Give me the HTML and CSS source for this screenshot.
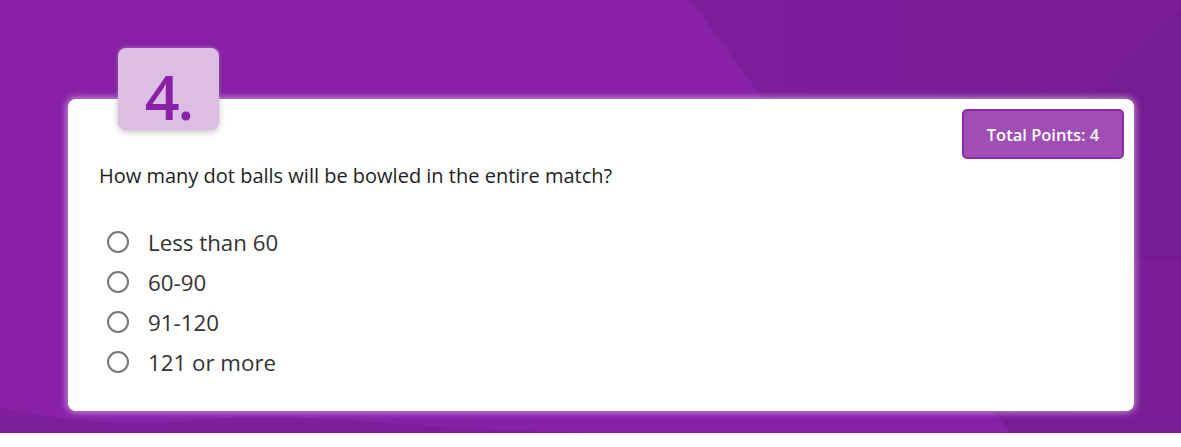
FILE: index.html
```html
<!DOCTYPE html>
<html>
<head>
<meta charset="utf-8">
<link rel="stylesheet" href="styles.css">
</head>
<body>
<div class="stage">
  <svg class="bg-shapes" width="1181" height="433" viewBox="0 0 1181 433" preserveAspectRatio="none">
    <defs>
      <linearGradient id="g1" x1="0" y1="0" x2="1" y2="0">
        <stop offset="0" stop-color="#6f1a8a" stop-opacity="0.6"/>
        <stop offset="1" stop-color="#741c91" stop-opacity="1"/>
      </linearGradient>
    </defs>
    <path d="M690 0 L1181 0 L1181 433 L1010 433 Z" fill="url(#g1)" opacity="0.75"/>
    <path d="M1181 10 C1100 80 1010 180 950 260 L1181 260 Z" fill="#6d1988" opacity="0.25"/>
    <path d="M0 408 C60 420 120 428 200 420 C300 410 420 430 600 433 L0 433 Z" fill="#6d1988" opacity="0.35"/>
  </svg>
  <div class="card">
    <div class="num">4.</div>
    <div class="card-top">
      <button class="points">Total Points: 4</button>
    </div>
    <div class="question">How many dot balls will be bowled in the entire match?</div>
    <ul class="options">
      <li class="option"><span class="radio"></span><span>Less than 60</span></li>
      <li class="option"><span class="radio"></span><span>60-90</span></li>
      <li class="option"><span class="radio"></span><span>91-120</span></li>
      <li class="option"><span class="radio"></span><span>121 or more</span></li>
    </ul>
  </div>
</div>
</body>
</html>
```
FILE: styles.css
```css
html, body {
  margin: 0;
  padding: 0;
  background: #ffffff;
  font-family: "Open Sans", "Noto Sans", sans-serif;
}
.stage {
  position: relative;
  height: 433px;
  background: #8921a8;
  padding: 99px 47px 0 68px;
  box-sizing: border-box;
  overflow: hidden;
}
.bg-shapes {
  position: absolute;
  left: 0;
  top: 0;
}
.card {
  position: relative;
  width: 1066px;
  height: 312px;
  box-sizing: border-box;
  background: #ffffff;
  border-radius: 8px;
  box-shadow: 0 0 6px 2px rgba(255, 255, 255, 0.45);
  padding: 10px 10px 0 31px;
}
.num {
  position: absolute;
  left: 50px;
  top: -51px;
  width: 101px;
  height: 82px;
  background: #dcbde4;
  border-radius: 8px;
  box-shadow: 0 2px 6px rgba(0, 0, 0, 0.25), 0 0 4px rgba(255, 255, 255, 0.4);
  color: #8a22a8;
  font-size: 61px;
  font-weight: 600;
  line-height: 98px;
  text-align: center;
  letter-spacing: -2px;
  box-sizing: border-box;
  padding-left: 0;
}
.card-top {
  display: flex;
  justify-content: flex-end;
}
.points {
  width: 162px;
  height: 50px;
  background: #a04db6;
  border: 2px solid #8d2aaa;
  border-radius: 5px;
  color: #ffffff;
  font-family: "Open Sans", "Noto Sans", sans-serif;
  font-size: 16.5px;
  font-weight: 600;
  padding: 0;
}
.question {
  margin-top: 3px;
  font-size: 20px;
  line-height: 28px;
  color: #1e1e1e;
}
.options {
  list-style: none;
  margin: 37px 0 0 0;
  padding: 0 0 0 8px;
  display: flex;
  flex-direction: column;
  gap: 10px;
}
.option {
  display: flex;
  align-items: center;
  gap: 19px;
  height: 30px;
  font-size: 22.3px;
  color: #333333;
}
.radio {
  width: 18px;
  height: 18px;
  border: 2px solid #777777;
  border-radius: 50%;
  flex: none;
}
```
